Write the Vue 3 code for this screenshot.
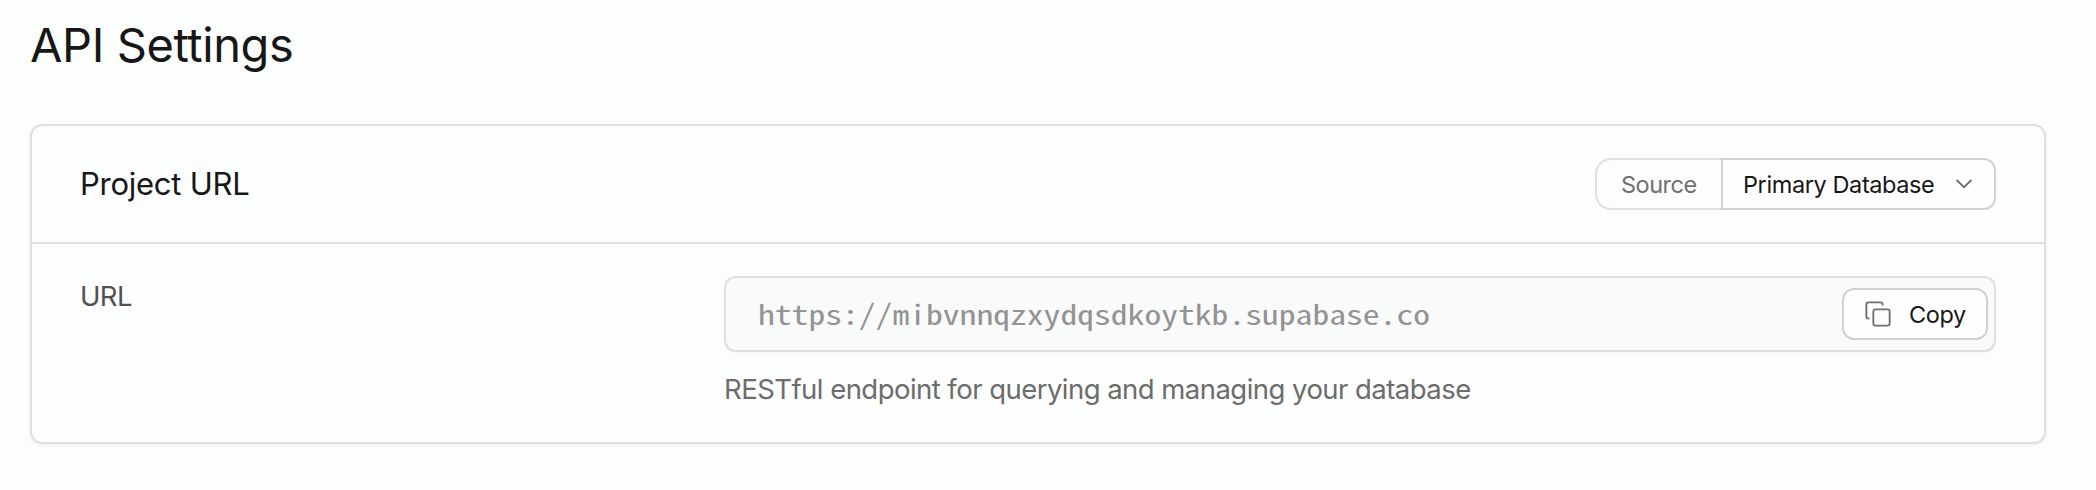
<script setup>
const url = 'https://mibvnnqzxydqsdkoytkb.supabase.co'
</script>

<template>
  <main class="page">
    <h1 class="title">API Settings</h1>
    <section class="card">
      <header class="head">
        <h2 class="heading">Project URL</h2>
        <div class="group">
          <span class="source">Source</span>
          <button class="select" type="button">
            <span>Primary Database</span>
            <svg class="chevron" viewBox="0 0 28 28" fill="none">
              <path d="M6.6 10 14 17.2 21.4 10" stroke="#707070" stroke-width="1.9" />
            </svg>
          </button>
        </div>
      </header>
      <div class="body">
        <label class="label">URL</label>
        <div class="field">
          <div class="input">
            <span class="url">{{ url }}</span>
            <button class="copy" type="button">
              <svg class="copy-icon" viewBox="0 0 24 24" fill="none" stroke="#707070" stroke-width="1.6" stroke-linecap="round" stroke-linejoin="round">
                <rect x="8" y="8" width="14" height="14" rx="1.8" />
                <path d="M4 16c-1.1 0-2-.9-2-2V4c0-1.1.9-2 2-2h10c1.1 0 2 .9 2 2" />
              </svg>
              <span>Copy</span>
            </button>
          </div>
          <p class="help">RESTful endpoint for querying and managing your database</p>
        </div>
      </div>
    </section>
  </main>
</template>

<style>
html,
body {
  background: #fcfdfd;
}
</style>

<style scoped>
.page {
  box-sizing: border-box;
  height: 490px;
  padding: 13px 50px 0 30px;
  background: #fcfdfd;
  color: #171717;
  font-family: Inter, "Liberation Sans", sans-serif;
  overflow: hidden;
}
.page * {
  box-sizing: border-box;
  white-space: nowrap;
}
.title {
  margin: 0;
  height: 111px;
  font-size: 47px;
  line-height: 64px;
  font-weight: 400;
  letter-spacing: -0.4px;
}
.card {
  height: 320px;
  border: 2px solid #dfdfdf;
  border-radius: 12px;
  box-shadow: 0 2px 4px rgba(0, 0, 0, 0.05);
}
.head {
  display: flex;
  align-items: center;
  justify-content: space-between;
  height: 118px;
  padding: 0 48px;
  border-bottom: 2px solid #dfdfdf;
}
.heading {
  margin: 0;
  font-size: 31px;
  line-height: 40px;
  font-weight: 400;
  letter-spacing: -0.25px;
}
.group {
  display: flex;
  height: 52px;
}
.source {
  display: flex;
  align-items: center;
  width: 126px;
  padding-left: 24px;
  border: 2px solid #dfdfdf;
  border-right: 0;
  border-radius: 16px 0 0 16px;
  color: #707070;
  font-size: 23.5px;
  letter-spacing: -0.5px;
}
.select,
.copy {
  display: flex;
  align-items: center;
  background: #fefefe;
  border: 2px solid #d1d1d1;
  color: #171717;
  font-family: inherit;
  font-size: 23.5px;
  font-weight: 400;
}
.select {
  justify-content: space-between;
  width: 275px;
  padding: 0 16px 0 20px;
  border-radius: 0 12px 12px 0;
  letter-spacing: -0.4px;
}
.chevron {
  width: 28px;
  height: 28px;
}
.body {
  display: flex;
  padding: 32px 48px 0;
}
.label {
  width: 644px;
  color: #525252;
  font-size: 27.5px;
  line-height: 40px;
  letter-spacing: -0.6px;
}
.field {
  flex: 1;
}
.input {
  display: flex;
  align-items: center;
  justify-content: space-between;
  height: 76px;
  padding: 0 6px 0 32px;
  border: 2px solid #dfdfdf;
  border-radius: 12px;
  background: #f9fafa;
  box-shadow: 0 2px 3px rgba(0, 0, 0, 0.025);
}
.url {
  padding-bottom: 2px;
  color: #939393;
  font-family: "Noto Sans Mono CJK SC", "Liberation Mono", monospace;
  font-size: 28px;
  line-height: 40px;
  transform: scaleX(1.2);
  transform-origin: left center;
}
.copy {
  width: 146px;
  height: 52px;
  padding: 0 20px;
  border-radius: 12px;
  gap: 17px;
  letter-spacing: -0.4px;
}
.copy-icon {
  width: 28px;
  height: 28px;
  flex: none;
}
.help {
  margin: 17px 0 0;
  color: #6c6c6c;
  font-size: 27.5px;
  line-height: 40px;
  letter-spacing: -0.54px;
}
</style>
